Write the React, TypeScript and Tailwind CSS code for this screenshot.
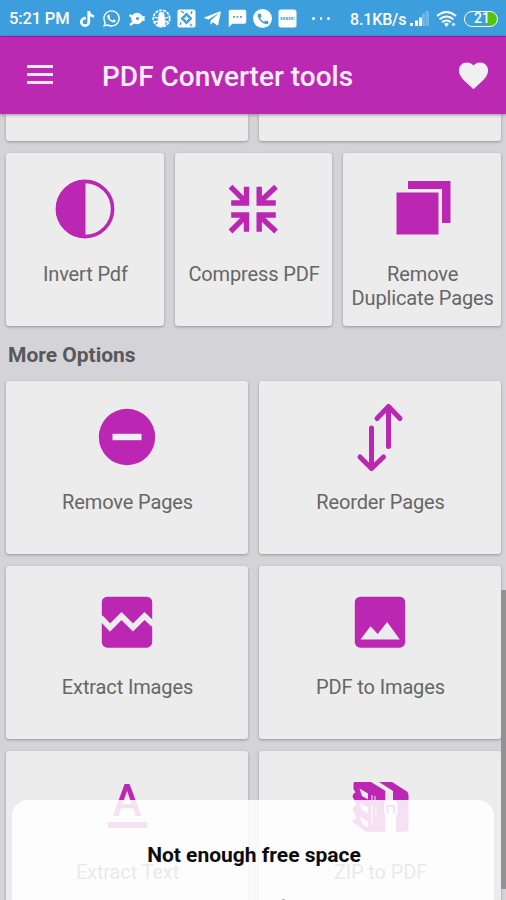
import React from 'react';
import { FaTiktok, FaWhatsapp, FaTelegramPlane } from 'react-icons/fa';
import { MdSms, MdCall, MdFavorite } from 'react-icons/md';

interface Tool {
  label: string;
  icon: React.ReactNode;
}

const InvertIcon = () => (
  <svg width="60" height="60" viewBox="0 0 60 60" className="block">
    <circle cx="30" cy="30" r="27.6" fill="none" stroke="currentColor" strokeWidth="3.6" />
    <path d="M30.5 1v58H30a29 29 0 0 1 0-58z" fill="currentColor" />
  </svg>
);

const CompressIcon = () => (
  <svg width="60" height="60" viewBox="0 0 60 60" fill="none" stroke="currentColor" strokeWidth="5.4" className="block">
    <path d="M8.2 24h15.3V7.7M7.5 7.7l15 15" />
    <path d="M52.8 24H36.200V7.700M53 7.700l-16 15" />
    <path d="M8.2 36h15.3v16.7M7.5 52.5l15-15" />
    <path d="M52.8 36H36.200v16.700M53 52.500l-16-15" />
  </svg>
);

const DuplicateIcon = () => (
  <svg width="60" height="60" viewBox="0 0 60 60" fill="currentColor" className="block">
    <path d="M4.5 13.5h42v42h-42z" />
    <path d="M16 2h42.5v42H50V10H16z" />
  </svg>
);

const RemoveIcon = () => (
  <svg width="60" height="60" viewBox="0 0 60 60" className="block">
    <circle cx="30" cy="30" r="28.2" fill="currentColor" />
    <path d="M15.5 26.8h29v6.4h-29z" fill="#f4eef4" />
  </svg>
);

const ReorderIcon = () => (
  <svg
    width="60"
    height="72"
    viewBox="0 0 60 72"
    fill="none"
    stroke="currentColor"
    strokeWidth="5"
    strokeLinecap="round"
    strokeLinejoin="round"
    className="block"
  >
    <path d="M38.5 45.5V5.5M27 17.5l11.5-12 11.5 12" />
    <path d="M21.5 27v40M10 56l11.5 11.5L33.5 56" />
  </svg>
);

const ExtractImagesIcon = () => (
  <svg width="60" height="60" viewBox="0 0 60 60" className="block">
    <rect x="4.8" y="4.7" width="50.4" height="51" rx="5.5" fill="currentColor" />
    <path d="M2 25l3 2 8 8.5L24.5 24l11.5 11.5L47.5 24l8 7.5 3 2" fill="none" stroke="#ececec" strokeWidth="5.8" />
  </svg>
);

const ToImagesIcon = () => (
  <svg width="60" height="60" viewBox="0 0 60 60" className="block">
    <rect x="4.8" y="4.7" width="50.4" height="51" rx="5.5" fill="currentColor" />
    <path d="M10.5 47.5L20.5 34.200l7.200 7.800L37.200 30l12.600 17.500z" fill="#ececec" />
  </svg>
);

const ExtractTextIcon = () => (
  <div className="flex h-[60px] w-[60px] flex-col items-center">
    <span className="h-[36px] pt-[6px] text-[44px] leading-[36px] font-medium">A</span>
    <span className="mt-[9px] h-[6px] w-[39px] bg-current" />
  </div>
);

// stack of books held together by a buckled belt
const ZipIcon = () => (
  <svg width="60" height="60" viewBox="0 0 60 60" className="block">
    <path
      d="M4 5h17l14.3 8.7v41H16L2.5 45l1-2.5 3-1-2.5-6-1.5-3 1-3 3-1-2.5-6-1.5-3 1-3 2-1-2-3.5V7z"
      fill="currentColor"
    />
    <path d="M29 5h13l15 9.5q1.5 1.500 1.500 4V51q0 3.700-3.500 3.700h-9V38h-3V14z" fill="currentColor" />
    <path d="M9.5 11.500l8.500 5v6l-6-3.500zM9.500 25.500l8.500 5v6l-6-3.500zM9.500 39.500l8.500 5v6l-6-3.500z" fill="#ececec" />
    <path d="M22 18v6M25 19v4M22 28v20M26 30v8" stroke="#ececec" strokeWidth="1" />
    <rect x="34" y="23.5" width="13.5" height="15.5" rx="4" fill="#ececec" />
    <path d="M36 37h9v18h-9z" fill="#ececec" />
    <path d="M37.5 36v-7h6.5v7" fill="none" stroke="currentColor" strokeWidth="2" />
  </svg>
);

const pdfTools: Tool[] = [
  { label: 'Invert Pdf', icon: <InvertIcon /> },
  { label: 'Compress PDF', icon: <CompressIcon /> },
  { label: 'Remove Duplicate Pages', icon: <DuplicateIcon /> },
];

const moreTools: Tool[] = [
  { label: 'Remove Pages', icon: <RemoveIcon /> },
  { label: 'Reorder Pages', icon: <ReorderIcon /> },
  { label: 'Extract Images', icon: <ExtractImagesIcon /> },
  { label: 'PDF to Images', icon: <ToImagesIcon /> },
  { label: 'Extract Text', icon: <ExtractTextIcon /> },
  { label: 'ZIP to PDF', icon: <ZipIcon /> },
];

const ToolCard = ({ label, icon }: Tool) => (
  <button className="flex h-[173px] flex-col items-center rounded-[3px] bg-[#ececec] pt-[21px] shadow-[0_1px_3px_rgba(0,0,0,0.3)]">
    <span className="flex h-[70px] items-center text-[#bb27b3]">{icon}</span>
    <span className="mt-[18px] pl-px text-center text-[20px] leading-6 tracking-[-0.13px] text-[#666]">{label}</span>
  </button>
);

const StatusBar = () => (
  <div className="flex h-9 shrink-0 items-center bg-[#3d9edd] pt-px pl-[9px] text-white">
    <span className="w-[70px] pt-[2px] text-[16.5px] font-medium tracking-[-0.15px] whitespace-nowrap">5:21 PM</span>
    <FaTiktok size={16} className="mr-[7px] shrink-0" />
    <FaWhatsapp size={19} className="mr-[7px] shrink-0" />
    <svg width="18" height="18" viewBox="0 0 18 18" className="mr-[6px] shrink-0">
      <circle cx="9" cy="8.5" r="5.8" fill="white" />
      <path d="M15.5 6v5M1.5 5l3 2M2 15l4-3" stroke="white" strokeWidth="2.2" />
      <circle cx="9.5" cy="8.5" r="1.5" fill="#3d9edd" />
    </svg>
    <svg width="19" height="19" viewBox="0 0 19 19" className="mr-[6px] shrink-0">
      <circle cx="9.5" cy="9.5" r="8.2" fill="none" stroke="white" strokeWidth="1.7" strokeDasharray="3 1" />
      <circle cx="9.5" cy="6" r="3" fill="white" />
      <path d="M7 8h5l1 9H6zM2.5 8l5 2M16.5 8l-5 2M3 13l4-1M16 13l-4-1" fill="white" stroke="white" strokeWidth="1.3" />
    </svg>
    <svg width="19" height="19" viewBox="0 0 19 19" className="mr-[7px] shrink-0">
      <rect x="0.5" y="0.5" width="18" height="18" rx="2" fill="white" />
      <path d="M9.5 3.5l6 6-6 6-6-6z" fill="#3d9edd" />
      <path d="M9.5 6.5l1 2 2 1-2 1-1 2-1-2-2-1 2-1z" fill="white" />
      <path d="M4 2l3 2M15 2l-1 3M3 16l1-3M15 17l-2-2" stroke="#3d9edd" strokeWidth="1.3" />
    </svg>
    <FaTelegramPlane size={19} className="mr-[5px] shrink-0" />
    <MdSms size={21} className="mr-[5px] shrink-0" />
    <span className="mr-[6px] flex size-[19px] shrink-0 items-center justify-center rounded-full bg-white text-[#3d9edd]">
      <MdCall size={14} />
    </span>
    <svg width="19" height="19" viewBox="0 0 19 19" className="shrink-0">
      <rect x="0.5" y="0.5" width="18" height="18" rx="2.5" fill="white" />
      <path d="M2.5 9.5h14" stroke="#3d9edd" strokeWidth="3" strokeDasharray="2 0.7" opacity="0.75" />
    </svg>
    <span className="ml-[15px] flex w-[38px] gap-[5px]">
      <i className="size-[2.5px] rounded-full bg-white" />
      <i className="size-[2.5px] rounded-full bg-white" />
      <i className="size-[2.5px] rounded-full bg-white" />
    </span>
    <span className="w-[60px] pt-[2px] text-[16px] font-medium tracking-[-0.15px] whitespace-nowrap">8.1KB/s</span>
    <svg width="20" height="18" viewBox="0 0 20 18" className="shrink-0">
      <path d="M0 13h3v3H0zM5 10.5h3V16H5zM9 7.5h3V16H9z" fill="white" />
      <path d="M12 3.5h3V16h-3zM15.500 1H19v15h-3.500z" fill="white" opacity="0.25" />
    </svg>
    <svg width="22" height="18" viewBox="0 0 22 18" fill="none" stroke="white" strokeWidth="2" className="ml-[6px] shrink-0">
      <path d="M1 6q9.5-8 19 0M3.5 9.2q7-5.5 14 0M6 12.2q4.5-3.5 9 0" />
      <path d="M8 13.7q2.5-1.5 5 0L10.5 17z" fill="white" stroke="none" />
      <circle cx="17.5" cy="14.5" r="1.7" fill="white" stroke="none" opacity="0.7" />
    </svg>
    <span className="ml-[6px] flex h-[16px] w-[34px] shrink-0 items-center overflow-hidden rounded-full border-[1.5px] border-white bg-[linear-gradient(90deg,transparent_70%,#4fc60c_70%)] pl-[9px] text-[14px] font-medium">
      21
    </span>
  </div>
);

const AppBar = () => (
  <header className="relative z-10 flex h-[78px] shrink-0 items-center border-t border-[#8c1cb0] bg-[#bb29b3] pr-[15px] pl-[27px] text-[#f6e8f6] shadow-[0_1px_3px_rgba(0,0,0,0.35)]">
    <button className="mb-[3px] flex w-[26px] flex-col gap-[5px]">
      <i className="h-[3px] bg-current" />
      <i className="h-[3px] bg-current" />
      <i className="h-[3px] bg-current" />
    </button>
    <h1 className="ml-[49px] flex-1 pt-[3px] text-[28px] font-medium text-[#faeefa]">PDF Converter tools</h1>
    <MdFavorite size={35} className="text-[#f1f0f1]" />
  </header>
);

const App: React.FC = () => {
  return (
    <div className="relative flex h-[900px] w-[506px] flex-col overflow-hidden bg-[#d4d4d8] font-['Roboto','Liberation_Sans',sans-serif]">
      <StatusBar />
      <AppBar />

      <main className="pr-[5px] pl-[6px]">
        <div className="grid grid-cols-2 gap-[11px]">
          <div className="h-[27px] rounded-b-[3px] bg-[#ececec] shadow-[0_1px_3px_rgba(0,0,0,0.3)]" />
          <div className="h-[27px] rounded-b-[3px] bg-[#ececec] shadow-[0_1px_3px_rgba(0,0,0,0.3)]" />
        </div>

        <div className="mt-[12px] grid grid-cols-3 gap-[11px]">
          {pdfTools.map((tool) => (
            <ToolCard key={tool.label} {...tool} />
          ))}
        </div>

        <h2 className="flex h-[55px] items-center pt-[4px] pl-[2px] text-[21px] font-bold text-[#58585a]">More Options</h2>

        <div className="grid grid-cols-2 gap-x-[11px] gap-y-[12px]">
          {moreTools.map((tool) => (
            <ToolCard key={tool.label} {...tool} />
          ))}
        </div>
      </main>

      {/* scroll thumb */}
      <div className="absolute top-[590px] right-0 h-[299px] w-[5px] bg-[#929292]" />

      {/* storage warning */}
      <div className="absolute top-[800px] left-[12px] h-[120px] w-[482px] rounded-t-[16px] bg-white/86">
        <p className="pt-[43px] pl-[2px] text-center text-[21px] leading-6 font-bold text-[#0c0c0c]">Not enough free space</p>
        <i className="absolute top-[99px] left-[270px] h-[2px] w-[3px] rounded-full bg-[#aaa]" />
      </div>
    </div>
  );
};

export default App;
